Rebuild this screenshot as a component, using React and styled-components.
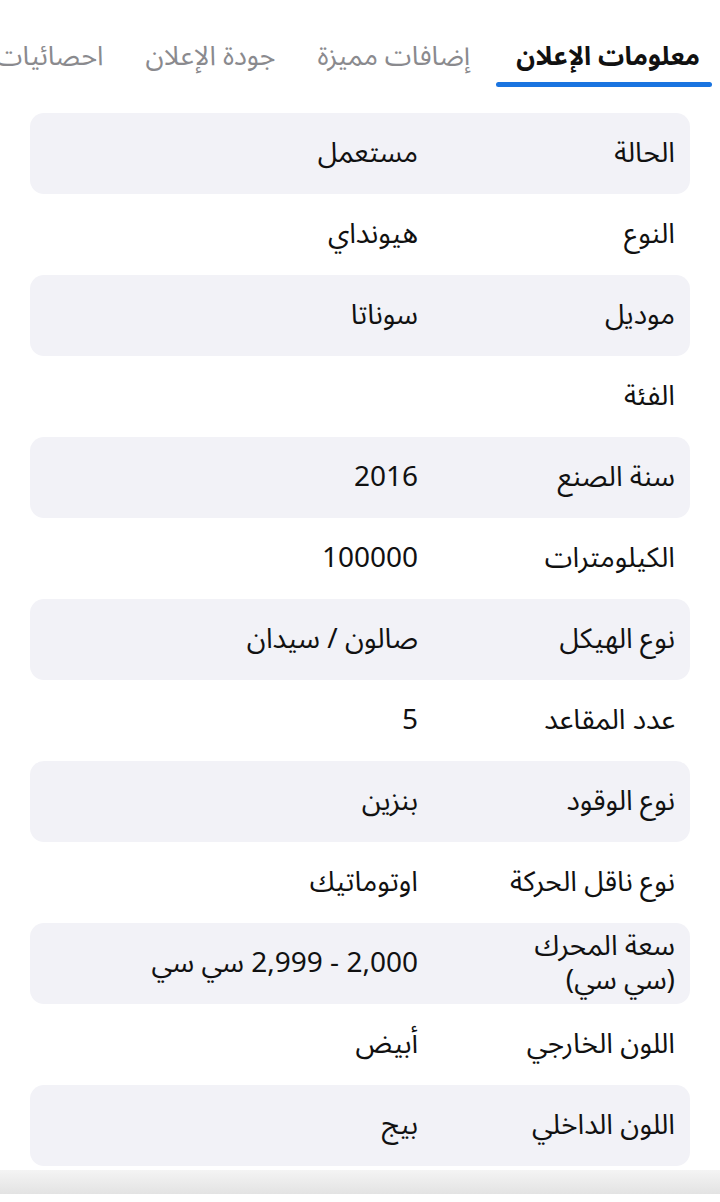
import React from "react";
import styled, { createGlobalStyle } from "styled-components";

const Global = createGlobalStyle`
  html, body { margin: 0; padding: 0; background: #ffffff; }
  body {
    font-family: "Noto Sans Arabic", "Noto Sans", "DejaVu Sans", sans-serif;
    color: #111111;
    -webkit-font-smoothing: antialiased;
  }
`;

const Page = styled.div`
  width: 720px;
  height: 1202px;
  overflow: hidden;
  direction: rtl;
  display: flex;
  flex-direction: column;
  background: #fff;
`;

const TabBar = styled.nav`
  display: flex;
  flex-wrap: nowrap;
  gap: 10px;
  overflow: hidden;
  padding: 30px 8px 0 0;
  height: 87px;
  box-sizing: border-box;
  flex-shrink: 0;
`;

const Tab = styled.div`
  flex-shrink: 0;
  position: relative;
  padding: ${(p) => (p.$active ? "7px 12px 0 20px" : "7px 16px 0")};
  height: 57px;
  display: flex;
  align-items: flex-start;
  box-sizing: border-box;
  font-size: ${(p) => (p.$active ? "26px" : "27px")};
  line-height: 40px;
  white-space: nowrap;
  font-weight: ${(p) => (p.$active ? 700 : 400)};
  color: ${(p) => (p.$active ? "#111" : "#8a8a8e")};
  &::after {
    content: "";
    display: ${(p) => (p.$active ? "block" : "none")};
    position: absolute;
    left: 0;
    right: 0;
    bottom: 0;
    height: 5px;
    border-radius: 3px;
    background: #1a74e0;
  }
`;

const List = styled.div`
  display: flex;
  flex-direction: column;
  padding: 26px 30px 0 30px;
`;

const Row = styled.div`
  display: flex;
  align-items: center;
  min-height: 81px;
  box-sizing: border-box;
  padding: 0 15px;
  gap: 22px;
  border-radius: 14px;
  background: ${(p) => (p.$shaded ? "#f2f2f7" : "transparent")};
`;

const Label = styled.div`
  width: 235px;
  flex-shrink: 0;
  font-size: 28px;
  line-height: 34px;
  color: #111;
`;

const Value = styled.div`
  flex: 1;
  font-size: 28px;
  line-height: 34px;
  color: #111;
`;

const BottomShade = styled.div`
  margin-top: 4px;
  height: 24px;
  flex-shrink: 0;
  background: linear-gradient(#f4f4f4, #e3e3e3);
`;

const rows = [
  ["الحالة", "مستعمل"],
  ["النوع", "هيونداي"],
  ["موديل", "سوناتا"],
  ["الفئة", ""],
  ["سنة الصنع", "2016"],
  ["الكيلومترات", "100000"],
  ["نوع الهيكل", "صالون / سيدان"],
  ["عدد المقاعد", "5"],
  ["نوع الوقود", "بنزين"],
  ["نوع ناقل الحركة", "اوتوماتيك"],
  ["سعة المحرك (سي\u00a0سي)", "2,000 - 2,999 سي سي"],
  ["اللون الخارجي", "أبيض"],
  ["اللون الداخلي", "بيج"],
];

export default function App() {
  return (
    <>
      <Global />
      <Page>
        <TabBar>
          <Tab $active>معلومات الإعلان</Tab>
          <Tab>إضافات مميزة</Tab>
          <Tab>جودة الإعلان</Tab>
          <Tab>احصائيات</Tab>
        </TabBar>
        <List>
          {rows.map(([label, value], i) => (
            <Row key={label} $shaded={i % 2 === 0}>
              <Label>{label}</Label>
              <Value>{value}</Value>
            </Row>
          ))}
        </List>
        <BottomShade />
      </Page>
    </>
  );
}
